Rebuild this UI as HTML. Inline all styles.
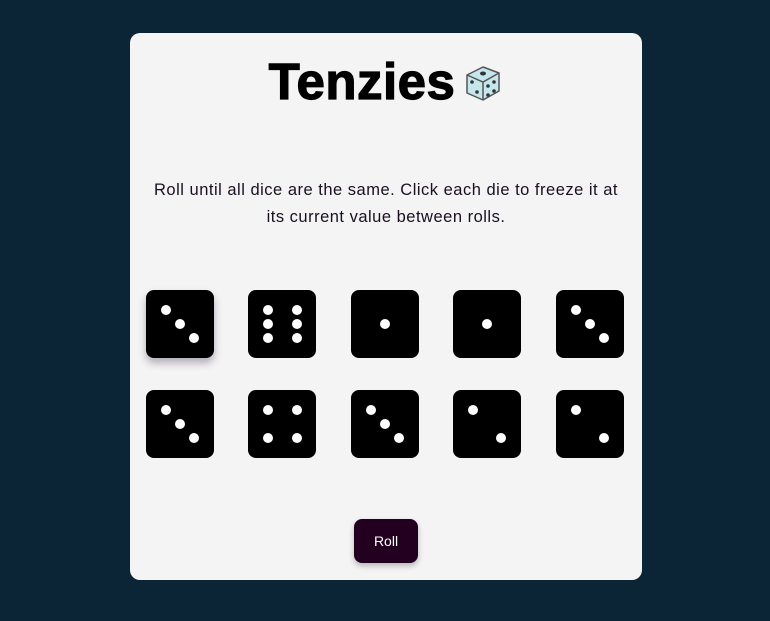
<!DOCTYPE html>
<html><head><style>
html,body{margin:0;padding:0;}
body{width:770px;height:621px;background:#0b2536;position:relative;font-family:"Liberation Sans",sans-serif;overflow:hidden;}
.card{position:absolute;left:130px;top:33px;width:512px;height:547px;background:#f4f4f4;border-radius:10px;}
h1{position:absolute;left:0;width:512px;top:23px;margin:0;text-align:center;font-size:51px;font-weight:bold;line-height:1;color:#000;letter-spacing:0.5px;-webkit-text-stroke:1.2px #000;}
h1 svg{vertical-align:-4px;margin-left:8px;}
p{position:absolute;left:16px;width:480px;top:144px;margin:0;text-align:center;font-size:16.5px;line-height:27px;color:#1a1020;letter-spacing:0.5px;}
.d{position:absolute;width:68px;height:68px;background:#000;border-radius:8px;}
.d i{position:absolute;width:10px;height:10px;border-radius:50%;background:#fff;margin:-5px 0 0 -5px;}
.btn{position:absolute;left:224px;top:486px;width:64px;height:44px;background:#23001f;border-radius:8px;color:#fff;font-size:14px;text-align:center;line-height:44px;box-shadow:0 3px 6px rgba(0,0,0,.25);}
</style></head><body>
<div class="card">
<h1>Tenzies<svg width="40" height="40" viewBox="0 0 40 40"><path d="M4 12 L20 4 L36 10 L36 28 L20 37 L4 30 Z" fill="#c6e6ee" stroke="#555" stroke-width="1.5" stroke-linejoin="round"/><path d="M4 12 L20 19 L36 10 M20 19 L20 37" fill="none" stroke="#555" stroke-width="1.5"/><ellipse cx="20" cy="10.5" rx="3" ry="2" fill="#333"/><circle cx="9" cy="19" r="1.8" fill="#333"/><circle cx="14" cy="29" r="1.8" fill="#333"/><circle cx="25" cy="23" r="1.8" fill="#333"/><circle cx="31" cy="19" r="1.8" fill="#333"/><circle cx="25" cy="32" r="1.8" fill="#333"/><circle cx="31" cy="28" r="1.8" fill="#333"/></svg></h1>
<p>Roll until all dice are the same. Click each die to freeze it at its current value between rolls.</p>

<div class="d" style="left:16px;top:257px;box-shadow:0 5px 8px rgba(60,40,70,.35)"><i style="left:20px;top:20px"></i><i style="left:34px;top:34px"></i><i style="left:48px;top:48px"></i></div>
<div class="d" style="left:118px;top:257px"><i style="left:20px;top:20px"></i><i style="left:49px;top:20px"></i><i style="left:20px;top:34px"></i><i style="left:49px;top:34px"></i><i style="left:20px;top:48px"></i><i style="left:49px;top:48px"></i></div>
<div class="d" style="left:221px;top:257px"><i style="left:34px;top:34px"></i></div>
<div class="d" style="left:323px;top:257px"><i style="left:34px;top:34px"></i></div>
<div class="d" style="left:426px;top:257px"><i style="left:20px;top:20px"></i><i style="left:34px;top:34px"></i><i style="left:48px;top:48px"></i></div>

<div class="d" style="left:16px;top:357px"><i style="left:20px;top:20px"></i><i style="left:34px;top:34px"></i><i style="left:48px;top:48px"></i></div>
<div class="d" style="left:118px;top:357px"><i style="left:20px;top:20px"></i><i style="left:49px;top:20px"></i><i style="left:20px;top:48px"></i><i style="left:49px;top:48px"></i></div>
<div class="d" style="left:221px;top:357px"><i style="left:20px;top:20px"></i><i style="left:34px;top:34px"></i><i style="left:48px;top:48px"></i></div>
<div class="d" style="left:323px;top:357px"><i style="left:20px;top:20px"></i><i style="left:48px;top:48px"></i></div>
<div class="d" style="left:426px;top:357px"><i style="left:20px;top:20px"></i><i style="left:48px;top:48px"></i></div>

<div class="btn">Roll</div>
</div>
</body></html>
